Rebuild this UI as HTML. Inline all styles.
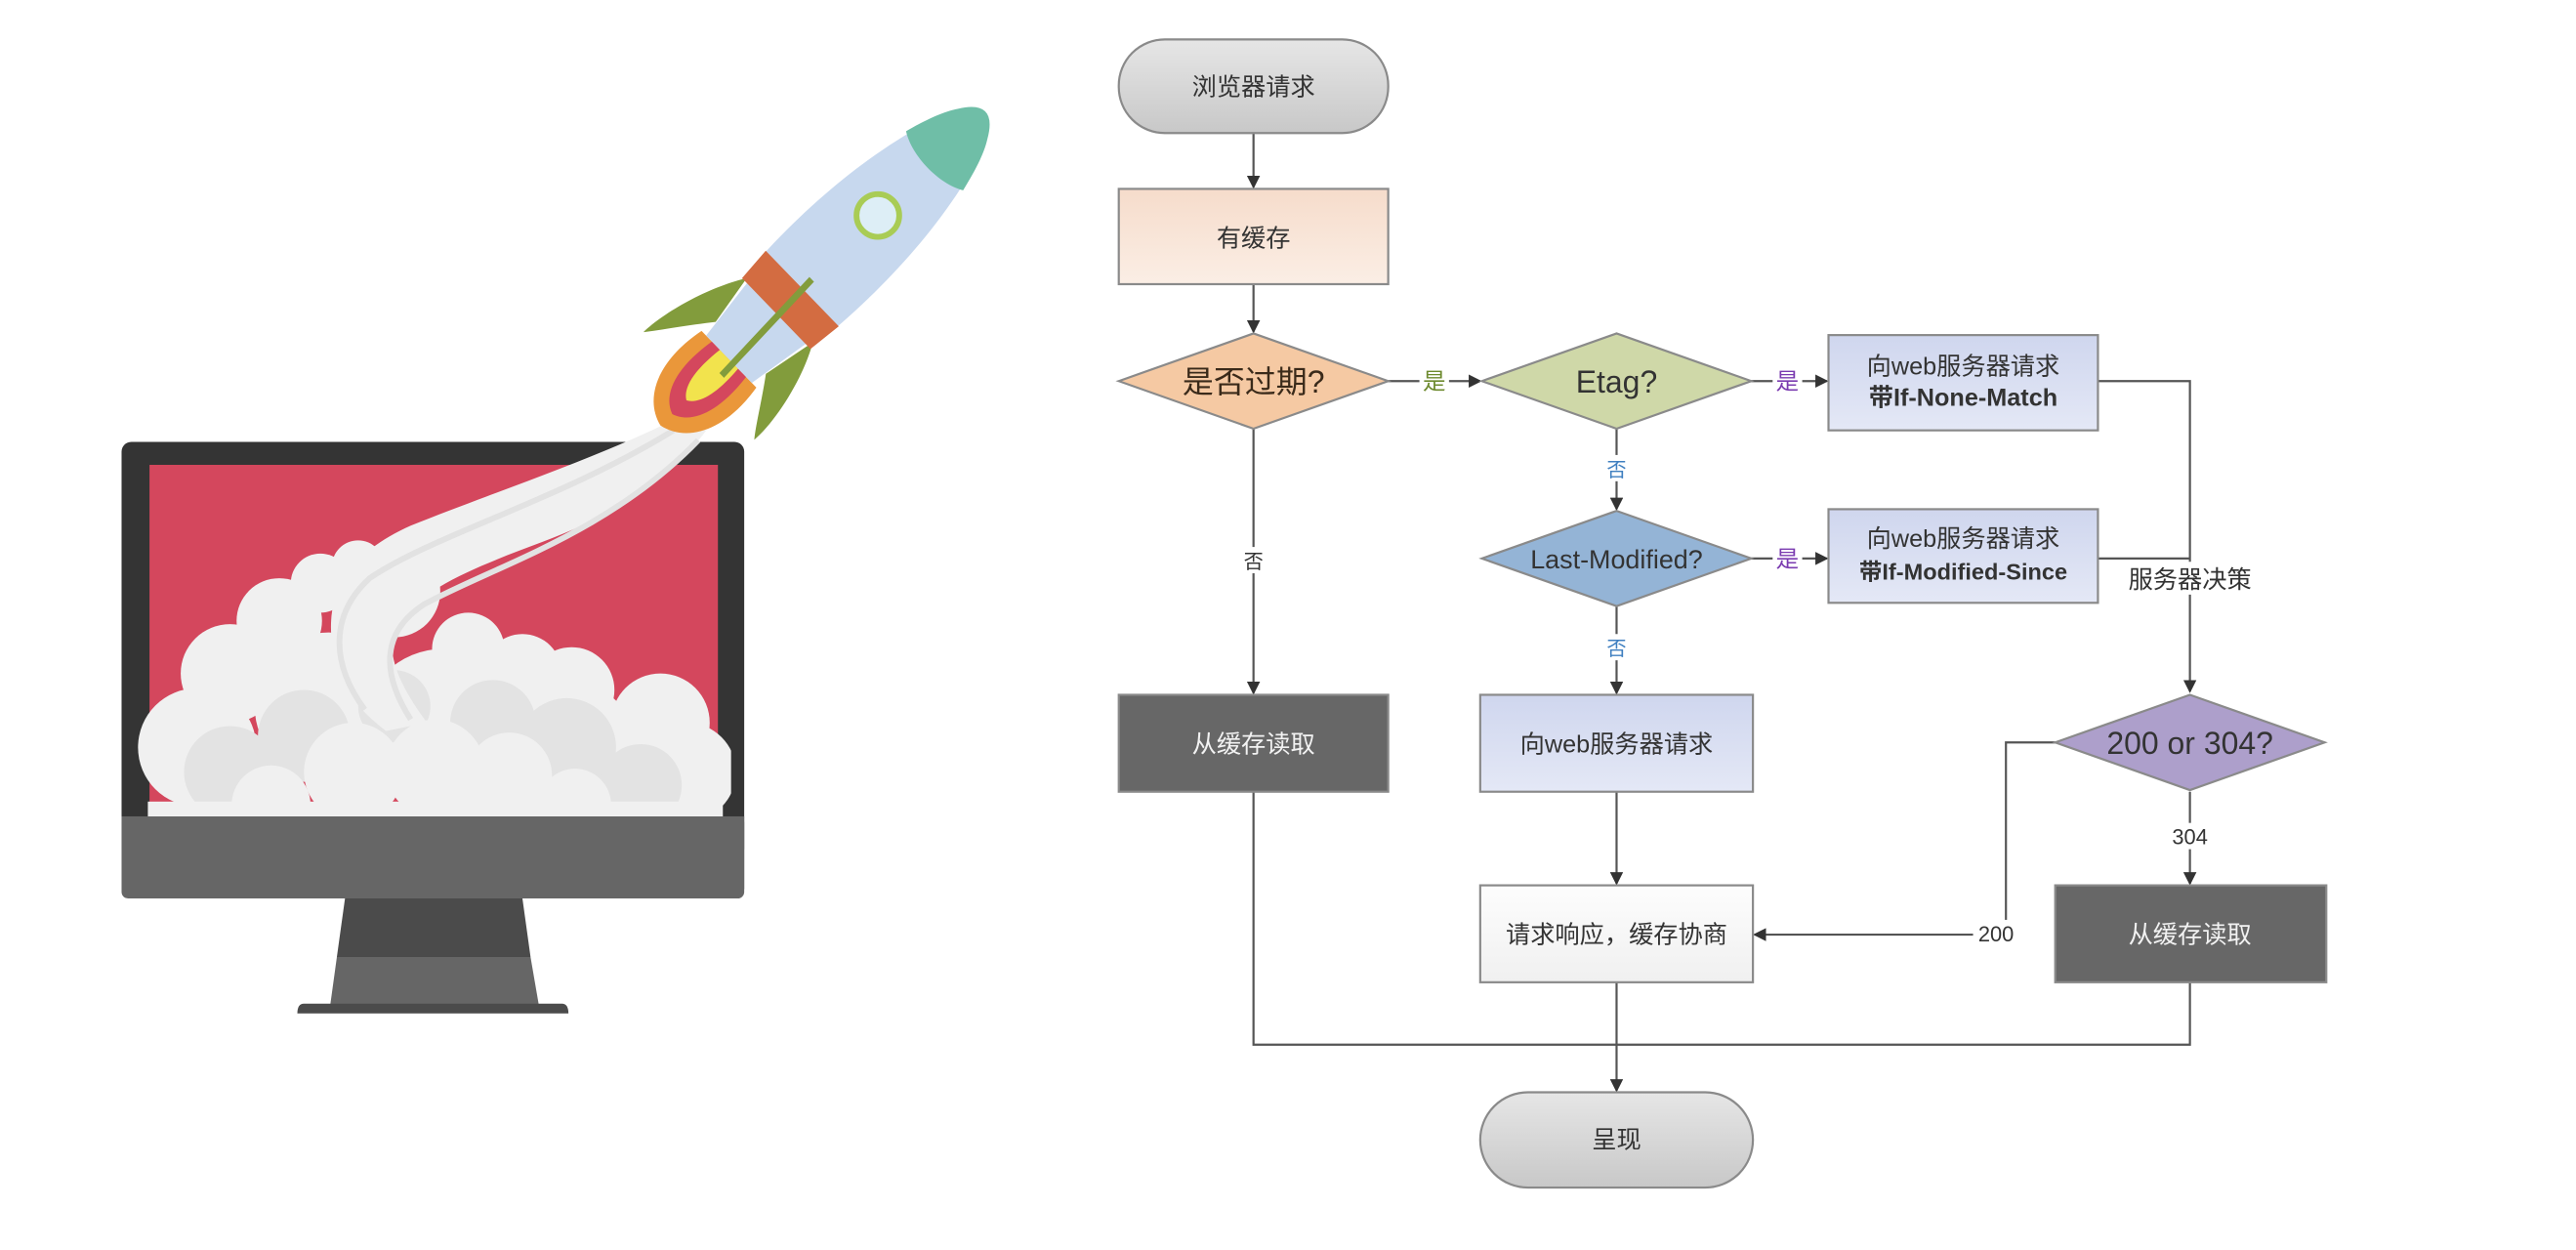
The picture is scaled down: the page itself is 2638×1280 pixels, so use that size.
<!DOCTYPE html>
<html><head><meta charset="utf-8"><style>
html,body{margin:0;padding:0;background:#fff;width:2638px;height:1280px;overflow:hidden}
svg{display:block}
text{font-family:"Liberation Sans","Noto Sans CJK SC",sans-serif;fill:#333}
</style></head><body>
<svg width="2638" height="1280" viewBox="0 0 1568 761" preserveAspectRatio="none" xmlns="http://www.w3.org/2000/svg">
<defs>
<linearGradient id="gpill" x1="0" y1="0" x2="0" y2="1"><stop offset="0" stop-color="#e6e6e6"/><stop offset="1" stop-color="#c8c8c8"/></linearGradient>
<linearGradient id="gpeach" x1="0" y1="0" x2="0" y2="1"><stop offset="0" stop-color="#f6dccb"/><stop offset="1" stop-color="#fbeee5"/></linearGradient>
<linearGradient id="glav" x1="0" y1="0" x2="0" y2="1"><stop offset="0" stop-color="#cfd6ee"/><stop offset="1" stop-color="#e4e8f6"/></linearGradient>
<linearGradient id="gwhite" x1="0" y1="0" x2="0" y2="1"><stop offset="0" stop-color="#fdfdfd"/><stop offset="1" stop-color="#f0f0f0"/></linearGradient>
<marker id="ar" markerWidth="8" markerHeight="8" refX="7" refY="4" orient="auto" markerUnits="userSpaceOnUse"><path d="M0,0 L8,4 L0,8 z" fill="#333"/></marker>
<clipPath id="scr"><rect x="83" y="240" width="362" height="257"/></clipPath>
</defs>

<!-- Monitor -->
<rect x="74" y="269" width="379" height="278" rx="6" fill="#343434"/>
<rect x="91" y="283" width="346" height="214" fill="#d4475d"/>
<rect x="74" y="497" width="379" height="50" rx="4" fill="#666"/>
<rect x="74" y="497" width="379" height="20" fill="#666"/>
<path d="M210,547 L318,547 L323,583 L205,583 z" fill="#4b4b4b"/>
<path d="M205,583 L323,583 L328,612 L201,612 z" fill="#666"/>
<path d="M185,611 L342,611 Q346,611 346,617 L181,617 Q181,611 185,611 z" fill="#4b4b4b"/>

<!-- clouds -->
<g clip-path="url(#scr)">
<g fill="#f0f0f0">
<circle cx="120" cy="455" r="36"/><circle cx="140" cy="410" r="30"/><circle cx="170" cy="378" r="26"/>
<circle cx="195" cy="355" r="18"/><circle cx="218" cy="345" r="16"/><circle cx="240" cy="360" r="28"/>
<circle cx="285" cy="395" r="22"/><circle cx="318" cy="410" r="24"/><circle cx="348" cy="420" r="26"/>
<circle cx="402" cy="440" r="30"/><circle cx="418" cy="470" r="30"/><circle cx="200" cy="430" r="45"/>
<circle cx="270" cy="445" r="50"/><circle cx="345" cy="460" r="45"/>
</g>
<g fill="#e3e3e3">
<circle cx="140" cy="470" r="28"/><circle cx="185" cy="448" r="28"/><circle cx="240" cy="430" r="22"/><circle cx="300" cy="440" r="26"/><circle cx="345" cy="455" r="30"/><circle cx="390" cy="478" r="25"/>
</g>
<g fill="#f0f0f0">
<circle cx="165" cy="490" r="24"/><circle cx="215" cy="470" r="30"/><circle cx="265" cy="468" r="30"/><circle cx="310" cy="472" r="26"/><circle cx="350" cy="490" r="22"/>
<rect x="90" y="488" width="350" height="12"/>
</g>
</g>

<!-- smoke trail -->
<path d="M405,258 C360,280 300,300 250,320 C205,340 195,370 205,405 C212,425 222,435 235,445 L260,440 C245,420 235,400 240,385 C250,360 290,345 330,330 C370,315 405,295 430,262 z" fill="#f0f0f0"/>
<path d="M222,432 C202,405 200,375 225,352 C265,325 340,305 410,262" fill="none" stroke="#e2e2e2" stroke-width="3.5"/>
<path d="M250,438 C232,410 232,385 258,368 C300,345 370,325 425,268" fill="none" stroke="#e2e2e2" stroke-width="3.5"/>

<!-- Rocket -->
<g transform="translate(402,259) rotate(-44)">
<!-- flame -->
<path d="M0,0 C4,-18 25,-30 58,-24 L58,24 C25,30 4,18 0,0 z" fill="#ea973a"/>
<path d="M10,0 C14,-12 30,-19 58,-15 L58,15 C30,19 14,12 10,0 z" fill="#d4475d"/>
<path d="M22,0 C26,-7 38,-10 58,-8 L58,8 C38,10 26,7 22,0 z" fill="#f2e34d"/>
<!-- fins -->
<path d="M68,-22 C55,-32 40,-42 32,-48 C50,-48 80,-40 100,-28 z" fill="#829c3c"/>
<path d="M68,22 C55,32 42,40 35,46 C52,47 82,40 102,28 z" fill="#829c3c"/>
<!-- body -->
<path d="M58,-20 L100,-26 L100,26 L58,20 z" fill="#c7d8ee"/>
<path d="M100,-30 C160,-36 220,-30 262,-14 Q285,0 262,14 C220,30 160,36 100,30 z" fill="#c7d8ee"/>
<path d="M232,-25 C248,-21 258,-17 264,-13 Q286,0 264,13 C258,17 248,21 232,25 C224,12 224,-12 232,-25 z" fill="#6fbea7"/>
<path d="M98,-30 L120,-32 L120,32 L98,30 z" fill="#d36c41"/>
<circle cx="184" cy="0" r="13" fill="#ddeef6" stroke="#a9cc55" stroke-width="3.5"/>
<path d="M48,2 L128,-2 L128,2 L48,6 z" fill="#829c3c"/>
</g>

<!-- Flowchart connectors -->
<g stroke="#555" stroke-width="1.3" fill="none">
<line x1="763" y1="81" x2="763" y2="114" marker-end="url(#ar)"/>
<line x1="763" y1="173" x2="763" y2="202" marker-end="url(#ar)"/>
<line x1="845" y1="232" x2="901" y2="232" marker-end="url(#ar)"/>
<line x1="763" y1="261" x2="763" y2="422" marker-end="url(#ar)"/>
<line x1="1066" y1="232" x2="1112" y2="232" marker-end="url(#ar)"/>
<line x1="984" y1="261" x2="984" y2="310" marker-end="url(#ar)"/>
<line x1="1066" y1="340" x2="1112" y2="340" marker-end="url(#ar)"/>
<line x1="984" y1="369" x2="984" y2="422" marker-end="url(#ar)"/>
<polyline points="1277,232 1333,232 1333,421" marker-end="url(#ar)"/>
<line x1="1277" y1="340" x2="1333" y2="340"/>
<line x1="1333" y1="482" x2="1333" y2="538" marker-end="url(#ar)"/>
<polyline points="1251,452 1221,452 1221,569 1068,569" marker-end="url(#ar)"/>
<line x1="984" y1="482" x2="984" y2="538" marker-end="url(#ar)"/>
<polyline points="763,482 763,636 1333,636 1333,598"/>
<line x1="984" y1="598" x2="984" y2="664" marker-end="url(#ar)"/>
</g>

<!-- shapes -->
<g stroke="#8a8a8a" stroke-width="1.3">
<rect x="681" y="24" width="164" height="57" rx="28" fill="url(#gpill)"/>
<rect x="681" y="115" width="164" height="58" fill="url(#gpeach)"/>
<path d="M681,232 L763,203 L845,232 L763,261 z" fill="#f5c9a3"/>
<path d="M902,232 L984,203 L1066,232 L984,261 z" fill="#cfd8a8"/>
<rect x="1113" y="204" width="164" height="58" fill="url(#glav)"/>
<path d="M902,340 L984,311 L1066,340 L984,369 z" fill="#94b4d6"/>
<rect x="1113" y="310" width="164" height="57" fill="url(#glav)"/>
<rect x="681" y="423" width="164" height="59" fill="#676767"/>
<rect x="901" y="423" width="166" height="59" fill="url(#glav)"/>
<path d="M1251,452 L1333,423 L1415,452 L1333,481 z" fill="#ad9fcb"/>
<rect x="901" y="539" width="166" height="59" fill="url(#gwhite)"/>
<rect x="1251" y="539" width="165" height="59" fill="#676767"/>
<rect x="901" y="665" width="166" height="58" rx="29" fill="url(#gpill)"/>
</g>

<!-- label backgrounds -->
<g fill="#fff">
<rect x="864" y="224" width="18" height="16"/>
<rect x="1079" y="224" width="18" height="16"/>
<rect x="1079" y="332" width="18" height="16"/>
<rect x="755" y="333" width="16" height="16"/>
<rect x="976" y="277" width="16" height="16"/>
<rect x="976" y="386" width="16" height="16"/>
<rect x="1290" y="342" width="86" height="20"/>
<rect x="1319" y="501" width="28" height="16"/>
<rect x="1201" y="560" width="28" height="16"/>
</g>

<!-- texts -->
<g text-anchor="middle" font-size="15">
<text x="763" y="58">浏览器请求</text>
<text x="763" y="150">有缓存</text>
<text x="763" y="239" font-size="19" style="fill:#3a2a1a">是否过期?</text>
<text x="984" y="239" font-size="19" style="fill:#333">Etag?</text>
<text x="1195" y="228" font-size="15">向web服务器请求</text>
<text x="1195" y="247" font-size="15" font-weight="bold">带If-None-Match</text>
<text x="984" y="346" font-size="16">Last-Modified?</text>
<text x="1195" y="333" font-size="15">向web服务器请求</text>
<text x="1195" y="353" font-size="14" font-weight="bold">带If-Modified-Since</text>
<text x="763" y="458" style="fill:#f2f2f2">从缓存读取</text>
<text x="984" y="458">向web服务器请求</text>
<text x="1333" y="459" font-size="19">200 or 304?</text>
<text x="984" y="574">请求响应，缓存协商</text>
<text x="1333" y="574" style="fill:#f2f2f2">从缓存读取</text>
<text x="984" y="699">呈现</text>
<text x="873" y="237" font-size="14" style="fill:#6d8a2e">是</text>
<text x="1088" y="237" font-size="14" style="fill:#7a3bb0">是</text>
<text x="1088" y="345" font-size="14" style="fill:#7a3bb0">是</text>
<text x="763" y="346" font-size="12">否</text>
<text x="984" y="290" font-size="12" style="fill:#3f7fc0">否</text>
<text x="984" y="399" font-size="12" style="fill:#3f7fc0">否</text>
<text x="1333" y="358" font-size="15">服务器决策</text>
<text x="1333" y="514" font-size="13">304</text>
<text x="1215" y="573" font-size="13">200</text>
</g>
</svg>
</body></html>
